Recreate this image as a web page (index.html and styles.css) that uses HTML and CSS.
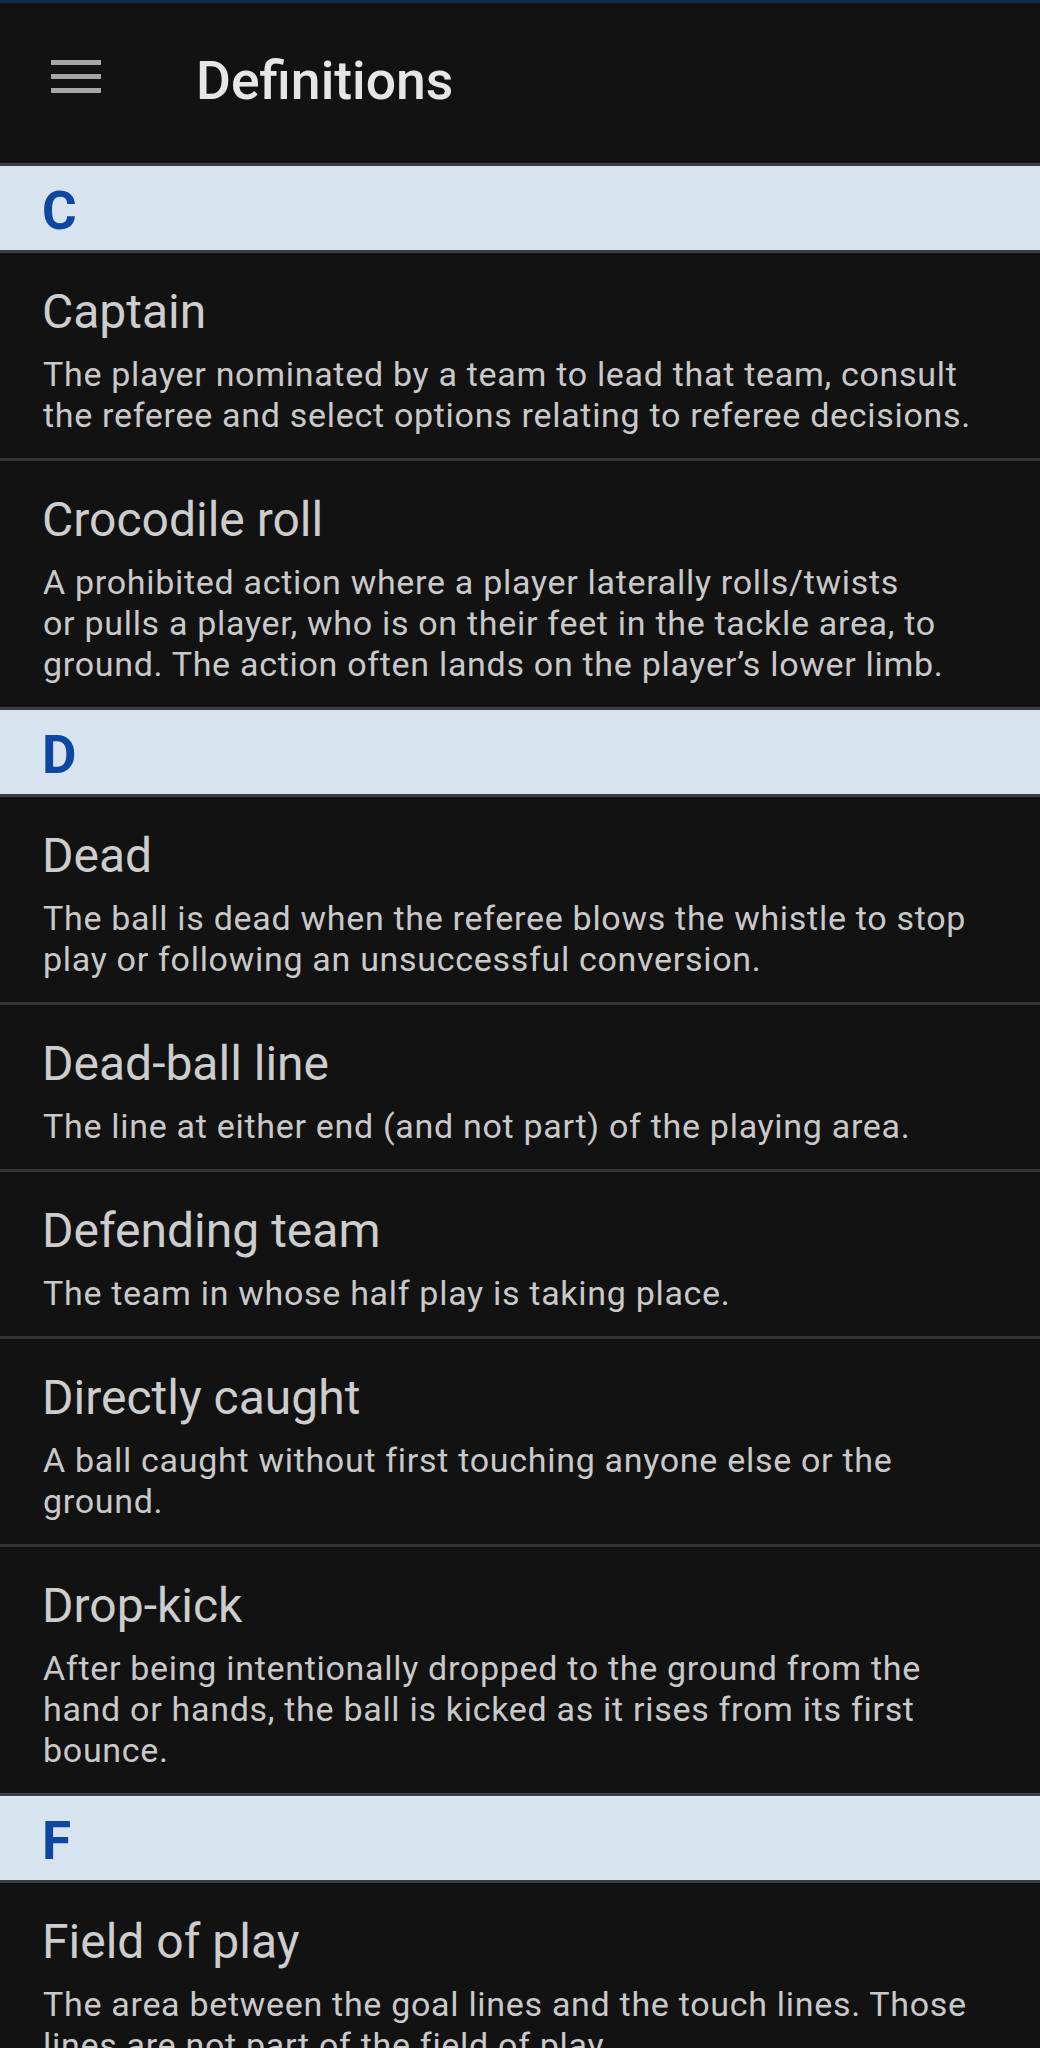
FILE: index.html
```html
<!DOCTYPE html>
<html lang="en">
<head>
<meta charset="utf-8">
<title>Definitions</title>
<link rel="stylesheet" href="styles.css">
</head>
<body>
<header class="app-bar">
  <svg class="menu-icon" width="50" height="33" viewBox="0 0 50 33" aria-hidden="true">
    <rect x="0" y="0" width="50" height="5" fill="#a6a6a6"/>
    <rect x="0" y="14" width="50" height="5" fill="#a6a6a6"/>
    <rect x="0" y="28" width="50" height="5" fill="#a6a6a6"/>
  </svg>
  <h1 class="app-title">Definitions</h1>
</header>
<main class="list">
  <div class="section">C</div>
  <div class="item">
    <div class="term">Captain</div>
    <div class="desc">The player nominated by a team to lead that team, consult<br>the referee and select options relating to referee decisions.</div>
  </div>
  <div class="item">
    <div class="term">Crocodile roll</div>
    <div class="desc">A prohibited action where a player laterally rolls/twists<br>or pulls a player, who is on their feet in the tackle area, to<br>ground. The action often lands on the player’s lower limb.</div>
  </div>
  <div class="section">D</div>
  <div class="item">
    <div class="term">Dead</div>
    <div class="desc">The ball is dead when the referee blows the whistle to stop<br>play or following an unsuccessful conversion.</div>
  </div>
  <div class="item">
    <div class="term">Dead-ball line</div>
    <div class="desc">The line at either end (and not part) of the playing area.</div>
  </div>
  <div class="item">
    <div class="term">Defending team</div>
    <div class="desc">The team in whose half play is taking place.</div>
  </div>
  <div class="item">
    <div class="term">Directly caught</div>
    <div class="desc">A ball caught without first touching anyone else or the<br>ground.</div>
  </div>
  <div class="item">
    <div class="term">Drop-kick</div>
    <div class="desc">After being intentionally dropped to the ground from the<br>hand or hands, the ball is kicked as it rises from its first<br>bounce.</div>
  </div>
  <div class="section">F</div>
  <div class="item">
    <div class="term">Field of play</div>
    <div class="desc">The area between the goal lines and the touch lines. Those<br>lines are not part of the field of play.</div>
  </div>
</main>
</body>
</html>
```
FILE: styles.css
```css
html, body {
  margin: 0;
  padding: 0;
  background: #121212;
}

body {
  font-family: Roboto, "Noto Sans", "Liberation Sans", sans-serif;
  height: 2048px;
  overflow: hidden;
}

.app-bar {
  box-sizing: border-box;
  height: 163px;
  border-top: 3px solid #0f2a52;
  padding: 0 0 4px 51px;
  display: flex;
  align-items: center;
  background: #121212;
}

.menu-icon {
  display: block;
  flex: none;
  margin-bottom: 9px;
}

.app-title {
  margin: 0 0 0 95px;
  font-size: 53.5px;
  line-height: 62px;
  font-weight: 500;
  color: #e6e6e6;
}

.list {
  display: flex;
  flex-direction: column;
  border-top: 3px solid #3a3d42;
}

.section {
  box-sizing: border-box;
  height: 87px;
  padding: 6px 0 0 42px;
  font-size: 53px;
  line-height: 78px;
  font-weight: 700;
  color: #0d47a1;
  background: #d8e3f0;
  border-bottom: 3px solid #3a3d42;
}

.item {
  padding: 31px 10px 22px 42px;
  border-bottom: 3px solid #333333;
}

.item:has(+ .section) {
  border-bottom-color: #3a3d42;
}

.term {
  font-size: 48px;
  line-height: 56px;
  font-weight: 400;
  color: #cdcdcd;
  margin-bottom: 14px;
  white-space: nowrap;
}

.desc {
  font-size: 34px;
  line-height: 41px;
  font-weight: 400;
  letter-spacing: 0.7px;
  color: #c9c9c9;
  white-space: nowrap;
  padding-left: 1px;
}
```
